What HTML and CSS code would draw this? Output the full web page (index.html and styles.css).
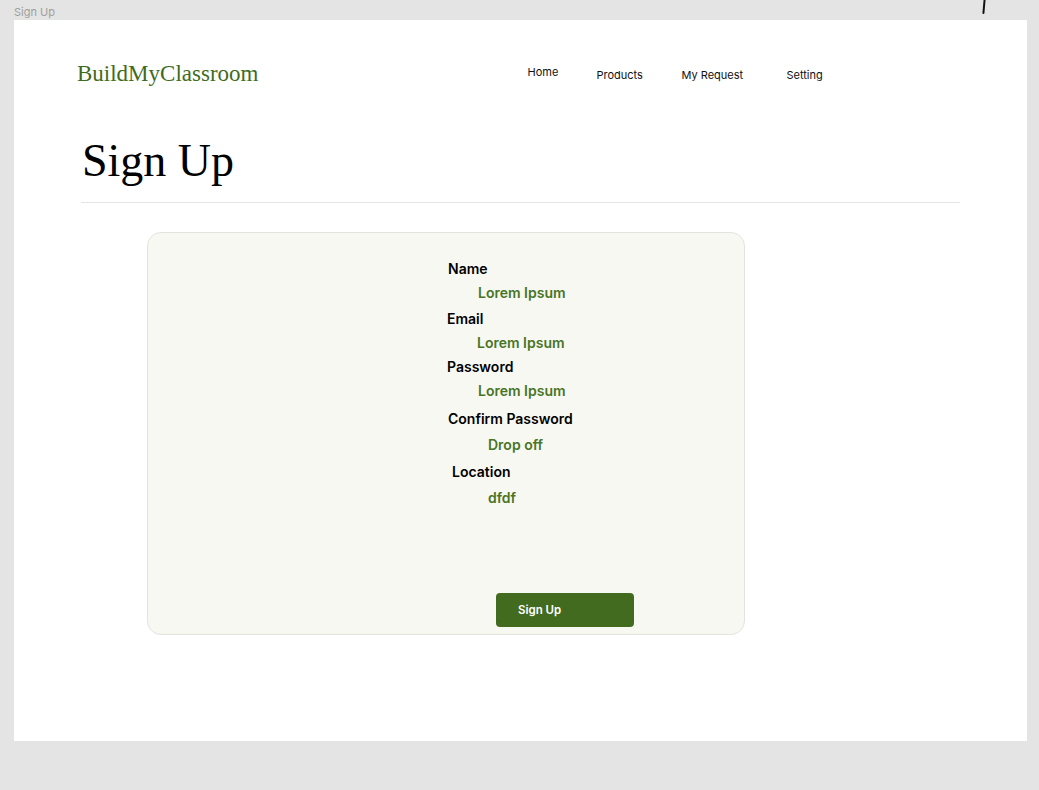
FILE: index.html
```html
<!DOCTYPE html>
<html lang="en">
<head>
<meta charset="utf-8">
<title>Sign Up</title>
<link rel="stylesheet" href="styles.css">
</head>
<body>
<div class="canvas-label">Sign Up</div>
<div class="stroke"></div>
<main class="frame">
  <header class="topbar">
    <div class="logo">BuildMyClassroom</div>
    <nav class="nav">
      <a class="nav-link nav-home">Home</a>
      <a class="nav-link nav-products">Products</a>
      <a class="nav-link nav-request">My Request</a>
      <a class="nav-link nav-setting">Setting</a>
    </nav>
  </header>
  <h1 class="title">Sign Up</h1>
  <hr class="divider">
  <section class="card">
    <div class="row label l-name">Name</div>
    <div class="row value v-name">Lorem Ipsum</div>
    <div class="row label l-email">Email</div>
    <div class="row value v-email">Lorem Ipsum</div>
    <div class="row label l-pass">Password</div>
    <div class="row value v-pass">Lorem Ipsum</div>
    <div class="row label l-confirm">Confirm Password</div>
    <div class="row value v-confirm">Drop off</div>
    <div class="row label l-loc">Location</div>
    <div class="row value v-loc">dfdf</div>
    <button class="btn">Sign Up</button>
  </section>
</main>
</body>
</html>
```
FILE: styles.css
```css
html, body {
  margin: 0;
  padding: 0;
}
body {
  background: #e4e4e4;
  width: 1039px;
  height: 790px;
  position: relative;
  overflow: hidden;
  font-family: Inter, "Noto Sans", sans-serif;
}
.canvas-label {
  height: 20px;
  padding-left: 14px;
  box-sizing: border-box;
  font-size: 11px;
  line-height: 24px;
  color: #a0a0a0;
}
.stroke {
  position: absolute;
  left: 983px;
  top: -1px;
  width: 2px;
  height: 15px;
  background: #111;
  transform: rotate(5deg);
  border-radius: 1px;
}
.frame {
  margin-left: 14px;
  width: 1013px;
  height: 721px;
  background: #fff;
  box-sizing: border-box;
  padding: 40px 67px 0 67px;
}
.topbar {
  display: flex;
  align-items: center;
  height: 28px;
}
.logo {
  font-family: "Liberation Serif", serif;
  font-size: 23px;
  line-height: 28px;
  color: #3f6b21;
  margin-left: -4px;
}
.nav {
  display: flex;
  align-items: center;
  margin-left: 269px;
  font-size: 11px;
  color: #111;
}
.nav-link {
  display: block;
  line-height: 14px;
  margin-top: 2px;
}
.nav-home {
  width: 69px;
  margin-top: -4px;
}
.nav-products { width: 85px; }
.nav-request { width: 105px; }
.title {
  margin: 50px 0 0 1px;
  font-family: "Liberation Serif", serif;
  font-weight: 400;
  font-size: 46px;
  line-height: 46px;
  color: #000;
}
.divider {
  margin: 18px 0 0 0;
  border: 0;
  height: 1px;
  background: #e4e4e4;
}
.card {
  margin: 29px 0 0 66px;
  width: 598px;
  height: 403px;
  box-sizing: border-box;
  border: 1.5px solid #e3e3e0;
  border-radius: 14px;
  background: #f8f8f3;
  padding-top: 24px;
  display: flex;
  flex-direction: column;
  align-items: flex-start;
}
.row {
  font-size: 14px;
  line-height: 24px;
  height: 24px;
}
.label {
  color: #000;
  font-weight: 600;
}
.value {
  color: #487525;
  font-weight: 600;
}
.l-name { margin-left: 300px; }
.v-name { margin-left: 330px; }
.l-email { margin-left: 299px; margin-top: 2px; }
.v-email { margin-left: 329px; }
.l-pass { margin-left: 299px; }
.v-pass { margin-left: 330px; }
.l-confirm { margin-left: 300px; margin-top: 4px; }
.v-confirm { margin-left: 340px; margin-top: 2px; }
.l-loc { margin-left: 304px; margin-top: 3px; }
.v-loc { margin-left: 340px; margin-top: 2px; }
.btn {
  margin-top: auto;
  margin-bottom: 7px;
  margin-left: 348px;
  width: 138px;
  height: 34px;
  border: 0;
  border-radius: 4px;
  background: #436b20;
  color: #fff;
  font-family: Inter, "Noto Sans", sans-serif;
  font-size: 11.5px;
  font-weight: 600;
  text-align: left;
  padding: 0 0 0 22px;
}
```
